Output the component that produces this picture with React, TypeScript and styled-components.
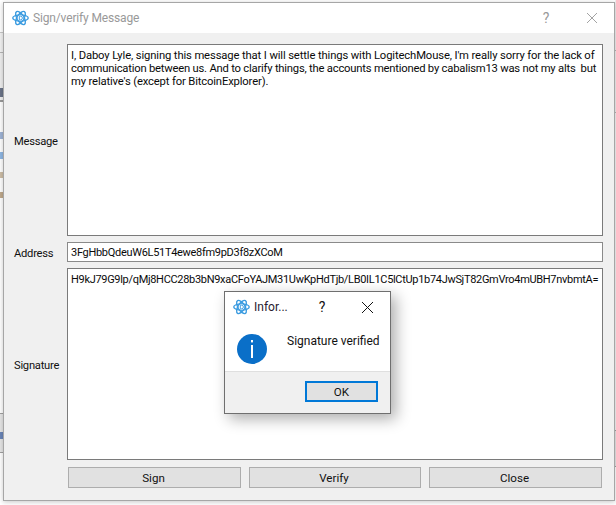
import React from "react";
import styled, { createGlobalStyle } from "styled-components";

const Global = createGlobalStyle`
  html, body { margin: 0; padding: 0; background: #ffffff; overflow: hidden; }
  #root { width: 616px; height: 505px; }
  * { box-sizing: border-box; }
`;

const Desk = styled.div`
  display: flex;
  width: 616px;
  height: 505px;
  font-family: Roboto, "Noto Sans", sans-serif;
  font-size: 11.6px;
  color: #000;
  background: #fff;
`;
const Strip = styled.div<{ $w: number }>`
  width: ${(p) => p.$w}px;
  flex: none;
  display: flex;
  flex-direction: column;
  overflow: hidden;
`;
const Sliver = styled.div<{ $h: number; $bg: string }>`
  height: ${(p) => p.$h}px;
  flex: none;
  background: ${(p) => p.$bg};
`;
const Window = styled.div`
  position: relative;
  flex: none;
  width: 612px;
  height: 499px;
  margin-top: 2px;
  background: #f0f0f0;
  border: 1px solid #a6a6a6;
  box-shadow: 0 1px 5px rgba(0, 0, 0, 0.22);
  display: flex;
  flex-direction: column;
`;
const TitleBar = styled.div`
  height: 30px;
  flex: none;
  background: #fff;
  display: flex;
  align-items: center;
  padding-left: 8px;
`;
const WindowTitle = styled.span`
  margin-left: 4px;
  font-size: 12px;
  letter-spacing: -0.15px;
  color: #999;
  flex: 1;
  white-space: nowrap;
`;
const TitleGlyph = styled.span<{ $w: number; $c: string; $ml?: number }>`
  width: ${(p) => p.$w}px;
  margin-left: ${(p) => p.$ml ?? 0}px;
  flex: none;
  display: flex;
  justify-content: center;
  align-items: center;
  font-size: 14px;
  color: ${(p) => p.$c};
`;
const Form = styled.div`
  display: grid;
  grid-template-columns: 53px 536px;
  grid-template-rows: 192px 20px 192px;
  row-gap: 6px;
  padding: 11px 0 0 10px;
`;
const FieldLabel = styled.div`
  align-self: center;
  white-space: nowrap;
  color: #111;
  font-size: 11.2px;
  letter-spacing: -0.25px;
  padding-top: 3px;
`;
const TextBox = styled.div`
  background: #fff;
  border: 1px solid #7a7a7a;
  padding: 4px 3px;
  font-size: 11.25px;
  line-height: 13px;
  white-space: pre;
  overflow: hidden;
  color: #0a0a0a;
`;
const TextLine = styled.div<{ $ls: number }>`
  letter-spacing: ${(p) => p.$ls}px;
`;
const SignatureBox = styled(TextBox)`
  font-size: 11px;
  letter-spacing: -0.31px;
`;
const LineBox = styled(TextBox)`
  padding: 2px 3px;
  font-size: 11px;
  letter-spacing: -0.3px;
  line-height: 15px;
  border-color: #8a8a8a;
`;
const Buttons = styled.div`
  display: flex;
  padding: 7px 0 0 64px;
  gap: 8px;
`;
const PushButton = styled.div<{ $w: number }>`
  width: ${(p) => p.$w}px;
  height: 21px;
  padding-right: 2px;
  background: #e1e1e1;
  border: 1px solid #adadad;
  display: flex;
  align-items: center;
  justify-content: center;
  color: #111;
`;
const Dialog = styled.div`
  position: absolute;
  left: 220px;
  top: 288px;
  width: 167px;
  height: 123px;
  background: #fff;
  border: 1px solid #6f6f6f;
  box-shadow: 5px 5px 14px rgba(0, 0, 0, 0.32);
  display: flex;
  flex-direction: column;
`;
const DialogTitle = styled.div`
  height: 30px;
  flex: none;
  display: flex;
  align-items: center;
  padding-left: 8px;
`;
const DialogCaption = styled.span`
  flex: none;
  margin-left: 4px;
  width: 63px;
  font-size: 12px;
  color: #2a1a30;
  white-space: nowrap;
`;
const DialogBody = styled.div`
  flex: 1;
  display: flex;
  padding: 12px 0 0 12px;
`;
const DialogText = styled.span`
  margin-left: 20px;
  font-size: 12px;
  white-space: nowrap;
  color: #111;
`;
const DialogFooter = styled.div`
  height: 42px;
  flex: none;
  background: #f0f0f0;
  border-top: 1px solid #dfdfdf;
  padding: 9px 0 0 80px;
`;
const OkButton = styled.div`
  width: 73px;
  height: 21px;
  background: #e1e1e1;
  border: 2px solid #0078d7;
  display: flex;
  align-items: center;
  justify-content: center;
  color: #111;
`;
const LogoMark = styled.svg`
  flex: none;
`;

const Logo = () => (
  <LogoMark width="17" height="16" viewBox="0 0 16 16" fill="none" stroke="#3a9be0" strokeWidth="1.3" preserveAspectRatio="none">
    <ellipse cx="8" cy="8" rx="7.3" ry="3.2" />
    <ellipse cx="8" cy="8" rx="7.3" ry="3.2" transform="rotate(60 8 8)" />
    <ellipse cx="8" cy="8" rx="7.3" ry="3.2" transform="rotate(120 8 8)" />
    <circle cx="8" cy="8" r="3.2" fill="#fff" strokeWidth="1" />
    <path d="M6.9 6.2v3.6h1.1a1.8 1.8 0 0 0 0-3.6z" strokeWidth="0.9" />
  </LogoMark>
);
const CloseGlyph = ({ c, s }: { c: string; s: number }) => (
  <svg width={s} height={s} viewBox="0 0 10 10" fill="none" stroke={c} strokeWidth="0.9">
    <path d="M0 0L10 10M10 0L0 10" />
  </svg>
);
const InfoIcon = () => (
  <svg width="30" height="30" viewBox="0 0 30 30">
    <circle cx="15" cy="15" r="15" fill="#0a6fc8" />
    <rect x="14" y="6" width="2" height="2.4" fill="#fff" />
    <rect x="14" y="11" width="2" height="13" fill="#fff" />
  </svg>
);

export default function App() {
  return (
    <Desk>
      <Global />
      <Strip $w={3}>
        <Sliver $h={32} $bg="#fff" />
        <Sliver $h={1} $bg="#c8c8c8" />
        <Sliver $h={19} $bg="#f2f2f2" />
        <Sliver $h={1} $bg="#b5b5b5" />
        <Sliver $h={35} $bg="#eeeeee" />
        <Sliver $h={9} $bg="#6b7488" />
        <Sliver $h={3} $bg="#f0f0f0" />
        <Sliver $h={2} $bg="#9a9a9a" />
        <Sliver $h={30} $bg="#fff" />
        <Sliver $h={7} $bg="#9fb4d6" />
        <Sliver $h={13} $bg="#fff" />
        <Sliver $h={7} $bg="#8fb7e4" />
        <Sliver $h={13} $bg="#fff" />
        <Sliver $h={6} $bg="#cdbda6" />
        <Sliver $h={14} $bg="#fff" />
        <Sliver $h={6} $bg="#bfa98c" />
        <Sliver $h={215} $bg="#fff" />
        <Sliver $h={1} $bg="#a0a0a0" />
        <Sliver $h={18} $bg="#e6e6e6" />
        <Sliver $h={7} $bg="#6a85b8" />
        <Sliver $h={13} $bg="#e6e6e6" />
        <Sliver $h={1} $bg="#a0a0a0" />
        <Sliver $h={40} $bg="#fff" />
      </Strip>
      <Window>
        <TitleBar>
          <Logo />
          <WindowTitle>Sign/verify Message</WindowTitle>
          <TitleGlyph $w={46} $c="#999">?</TitleGlyph>
          <TitleGlyph $w={45} $c="#999"><CloseGlyph c="#999" s={10} /></TitleGlyph>
        </TitleBar>
        <Form>
          <FieldLabel>Message</FieldLabel>
          <TextBox>
            <TextLine $ls={-0.13}>I, Daboy Lyle, signing this message that I will settle things with LogitechMouse, I'm really sorry for the lack of</TextLine>
            <TextLine $ls={-0.22}>communication between us. And to clarify things, the accounts mentioned by cabalism13 was not my alts  but</TextLine>
            <TextLine $ls={-0.15}>my relative's (except for BitcoinExplorer).</TextLine>
          </TextBox>
          <FieldLabel>Address</FieldLabel>
          <LineBox>3FgHbbQdeuW6L51T4ewe8fm9pD3f8zXCoM</LineBox>
          <FieldLabel>Signature</FieldLabel>
          <SignatureBox>H9kJ79G9lp/qMj8HCC28b3bN9xaCFoYAJM31UwKpHdTjb/LB0IL1C5lCtUp1b74JwSjT82GmVro4mUBH7nvbmtA=</SignatureBox>
        </Form>
        <Buttons>
          <PushButton $w={173}>Sign</PushButton>
          <PushButton $w={172}>Verify</PushButton>
          <PushButton $w={173}>Close</PushButton>
        </Buttons>
        <Dialog>
          <DialogTitle>
            <Logo />
            <DialogCaption>Infor...</DialogCaption>
            <TitleGlyph $w={10} $c="#111">?</TitleGlyph>
            <TitleGlyph $w={26} $ml={27} $c="#111"><CloseGlyph c="#111" s={11} /></TitleGlyph>
          </DialogTitle>
          <DialogBody>
            <InfoIcon />
            <DialogText>Signature verified</DialogText>
          </DialogBody>
          <DialogFooter>
            <OkButton>OK</OkButton>
          </DialogFooter>
        </Dialog>
      </Window>
      <Strip $w={1}>
        <Sliver $h={50} $bg="#f0f0f0" />
        <Sliver $h={1} $bg="#b5b5b5" />
        <Sliver $h={61} $bg="#f0f0f0" />
        <Sliver $h={1} $bg="#b5b5b5" />
        <Sliver $h={317} $bg="#f4f4f4" />
        <Sliver $h={1} $bg="#a0a0a0" />
        <Sliver $h={35} $bg="#e6e6e6" />
        <Sliver $h={1} $bg="#a0a0a0" />
        <Sliver $h={40} $bg="#fff" />
      </Strip>
    </Desk>
  );
}
